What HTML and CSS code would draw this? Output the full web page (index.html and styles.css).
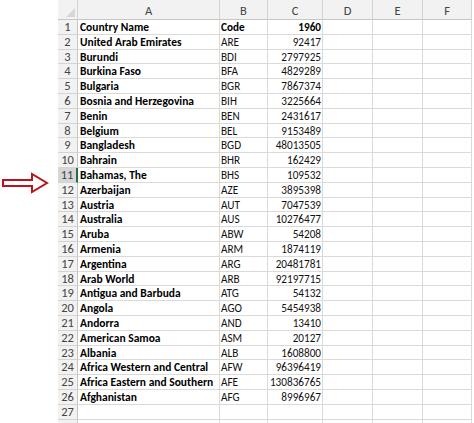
FILE: index.html
```html
<!DOCTYPE html>
<html lang="en">
<head>
    <meta charset="UTF-8">
    <title>Sheet</title>
    <link rel="stylesheet" href="styles.css">
</head>
<body>
    <div class="page">
        <svg class="arrow" viewBox="0 0 48 22" xmlns="http://www.w3.org/2000/svg">
            <path d="M2 8 H31 V2 L46 11 L31 20 V14 H2 Z"/>
        </svg>
        <div class="sheet" id="sheet">
            <div class="corner"><span class="tri"></span></div>
            <div class="colhead">A</div>
            <div class="colhead">B</div>
            <div class="colhead">C</div>
            <div class="colhead">D</div>
            <div class="colhead">E</div>
            <div class="colhead">F</div>
        </div>
    </div>

    <script>
        const rows = [
            ['Country Name', 'Code', '1960'],
            ['United Arab Emirates', 'ARE', '92417'],
            ['Burundi', 'BDI', '2797925'],
            ['Burkina Faso', 'BFA', '4829289'],
            ['Bulgaria', 'BGR', '7867374'],
            ['Bosnia and Herzegovina', 'BIH', '3225664'],
            ['Benin', 'BEN', '2431617'],
            ['Belgium', 'BEL', '9153489'],
            ['Bangladesh', 'BGD', '48013505'],
            ['Bahrain', 'BHR', '162429'],
            ['Bahamas, The', 'BHS', '109532'],
            ['Azerbaijan', 'AZE', '3895398'],
            ['Austria', 'AUT', '7047539'],
            ['Australia', 'AUS', '10276477'],
            ['Aruba', 'ABW', '54208'],
            ['Armenia', 'ARM', '1874119'],
            ['Argentina', 'ARG', '20481781'],
            ['Arab World', 'ARB', '92197715'],
            ['Antigua and Barbuda', 'ATG', '54132'],
            ['Angola', 'AGO', '5454938'],
            ['Andorra', 'AND', '13410'],
            ['American Samoa', 'ASM', '20127'],
            ['Albania', 'ALB', '1608800'],
            ['Africa Western and Central', 'AFW', '96396419'],
            ['Africa Eastern and Southern', 'AFE', '130836765'],
            ['Afghanistan', 'AFG', '8996967'],
            ['', '', ''],
            ['', '', '']
        ];

        const sheet = document.getElementById('sheet');

        function cell(text, cls) {
            const d = document.createElement('div');
            d.className = 'cell ' + cls;
            d.textContent = text;
            sheet.appendChild(d);
        }

        rows.forEach(function (r, i) {
            // last row is only partly visible, its number is below the fold
            cell(i < 27 ? i + 1 : '', 'rowhead' + (i === 10 ? ' selected' : ''));
            cell(r[0], 'name');
            cell(r[1], i === 0 ? 'code bold' : 'code');
            cell(r[2], i === 0 ? 'num bold' : 'num');
            cell('', 'empty');
            cell('', 'empty');
            cell('', 'empty');
        });
    </script>
</body>
</html>
```

FILE: styles.css
```css
* {
    box-sizing: border-box;
    margin: 0;
    padding: 0;
}
body {
    background: #ffffff;
    font-family: Carlito, "Open Sans", "Noto Sans", sans-serif;
    font-size: 11.2px;
    color: #000;
    overflow: hidden;
}
.page {
    position: relative;
    padding-left: 58px;
    height: 423px;
    overflow: hidden;
}
.arrow {
    position: absolute;
    left: 1px;
    top: 172px;
    width: 48px;
    height: 22px;
}
.arrow path {
    fill: #ffffff;
    stroke: #b8161e;
    stroke-width: 2;
    stroke-linejoin: miter;
}
.sheet {
    display: grid;
    grid-template-columns: 20px 142px 48px 55px 50px 50px 49px;
    grid-template-rows: 20px;
    grid-auto-rows: 14.8px;
    width: 414px;
    border-right: 1px solid #d8d8d8;
}
.corner,
.colhead {
    background: #f2f2f2;
    border-right: 1px solid #d4d4d4;
    border-bottom: 1px solid #c6c6c6;
    color: #444;
    font-size: 12.5px;
    display: flex;
    align-items: center;
    justify-content: center;
    padding-top: 2px;
}
.corner {
    position: relative;
}
.tri {
    position: absolute;
    right: 2px;
    bottom: 2px;
    width: 0;
    height: 0;
    border-left: 9px solid transparent;
    border-bottom: 9px solid #d6d6d6;
}
.cell {
    border-right: 1px solid #dadada;
    border-bottom: 1px solid #dadada;
    line-height: 14px;
    white-space: nowrap;
    overflow: hidden;
}
.rowhead {
    background: #f2f2f2;
    border-right: 1px solid #c6c6c6;
    border-bottom: 1px solid #d4d4d4;
    color: #444;
    font-size: 12.5px;
    text-align: center;
}
.rowhead.selected {
    background: #d6d6d6;
    border-right: 2px solid #217346;
}
.name {
    font-weight: bold;
    font-size: 11.5px;
    padding-left: 2px;
}
.code {
    padding-left: 1px;
    color: #111;
}
.num {
    text-align: right;
    padding-right: 1px;
    color: #111;
}
.bold {
    font-weight: bold;
    color: #000;
}
```
